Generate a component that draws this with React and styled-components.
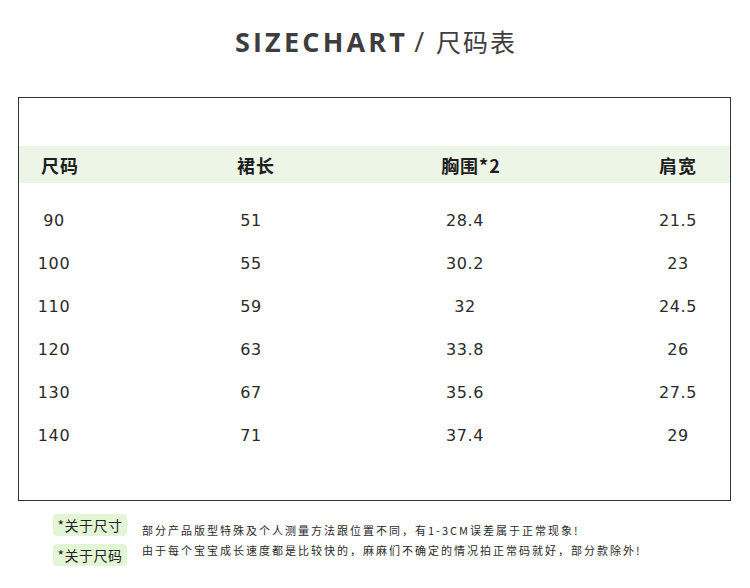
import React from "react";
import styled, { createGlobalStyle } from "styled-components";

const Global = createGlobalStyle`
  html, body { margin: 0; padding: 0; background: #ffffff; }
  body { font-family: "Noto Sans CJK SC", "Noto Sans", sans-serif; }
`;

const Page = styled.div`
  width: 750px;
  height: 588px;
  background: #fff;
  overflow: hidden;
`;

const Title = styled.h1`
  margin: 0;
  height: 82px;
  display: flex;
  align-items: center;
  justify-content: center;
  font-weight: normal;
  color: #3d3d3d;
  padding-left: 2px;
`;

const TitleEn = styled.span`
  font-family: "Open Sans", "Noto Sans", sans-serif;
  font-weight: 700;
  font-size: 27px;
  letter-spacing: 3.2px;
`;

const Slash = styled.span`
  font-family: "Open Sans", sans-serif;
  font-size: 27px;
  font-weight: 400;
  margin: 0 12px 0 6px;
`;

const TitleZh = styled.span`
  font-family: "Noto Sans CJK SC", sans-serif;
  font-weight: 400;
  font-size: 25px;
  letter-spacing: 2px;
`;

const Table = styled.div`
  margin: 15px 0 0 18px;
  width: 711px;
  border: 1px solid #333;
  padding: 48px 0 43px;
`;

const Row = styled.div`
  display: grid;
  grid-template-columns: ${(p) => p.$cols};
  padding-left: ${(p) => p.$pad}px;
  align-items: center;
  height: ${(p) => p.$h}px;
  background: ${(p) => p.$bg || "transparent"};
`;

const Body = styled.div`
  padding-top: 16px;
`;

const HeadCell = styled.span`
  width: 60px;
  text-align: center;
  font-family: "Noto Sans CJK SC", sans-serif;
  font-weight: 700;
  font-size: 18px;
  color: #1e1e1e;
  white-space: nowrap;
  letter-spacing: 1px;
`;

const Cell = styled.span`
  width: 60px;
  text-align: center;
  font-family: "DejaVu Sans", sans-serif;
  font-size: 16px;
  color: #2a2a2a;
  letter-spacing: 0.6px;
`;

const Footer = styled.div`
  display: flex;
  gap: 15px;
  padding: 13px 0 0 53px;
`;

const Tags = styled.div`
  display: flex;
  flex-direction: column;
  gap: 8px;
`;

const Tag = styled.span`
  width: 74px;
  height: 22px;
  border-radius: 4px;
  background: #e2f6d6;
  color: #222;
  font-size: 14px;
  display: flex;
  align-items: center;
  justify-content: center;
  letter-spacing: 0.5px;
  font-family: "Noto Sans CJK SC", sans-serif;
`;

const Notes = styled.div`
  padding-top: 6px;
  display: flex;
  flex-direction: column;
`;

const Note = styled.p`
  margin: 0;
  line-height: 20px;
  font-size: 11px;
  letter-spacing: 2px;
  color: #2a2a2a;
  font-family: "Noto Sans CJK SC", sans-serif;
  white-space: nowrap;
`;

const headers = ["尺码", "裙长", "胸围*2", "肩宽"];
const rows = [
  ["90", "51", "28.4", "21.5"],
  ["100", "55", "30.2", "23"],
  ["110", "59", "32", "24.5"],
  ["120", "63", "33.8", "26"],
  ["130", "67", "35.6", "27.5"],
  ["140", "71", "37.4", "29"],
];

export default function App() {
  return (
    <Page>
      <Global />
      <Title>
        <TitleEn>SIZECHART</TitleEn>
        <Slash>/</Slash>
        <TitleZh>尺码表</TitleZh>
      </Title>
      <Table>
        <Row $cols="196px 215px 207px 1fr" $pad={11} $h={37} $bg="#edf6e6">
          {headers.map((h) => (
            <HeadCell key={h}>{h}</HeadCell>
          ))}
        </Row>
        <Body>
          {rows.map((r) => (
            <Row key={r[0]} $cols="197px 214px 213px 1fr" $pad={5} $h={43}>
              {r.map((v, i) => (
                <Cell key={i}>{v}</Cell>
              ))}
            </Row>
          ))}
        </Body>
      </Table>
      <Footer>
        <Tags>
          <Tag>*关于尺寸</Tag>
          <Tag>*关于尺码</Tag>
        </Tags>
        <Notes>
          <Note>部分产品版型特殊及个人测量方法跟位置不同，有1-3CM误差属于正常现象!</Note>
          <Note>由于每个宝宝成长速度都是比较快的，麻麻们不确定的情况拍正常码就好，部分款除外!</Note>
        </Notes>
      </Footer>
    </Page>
  );
}
